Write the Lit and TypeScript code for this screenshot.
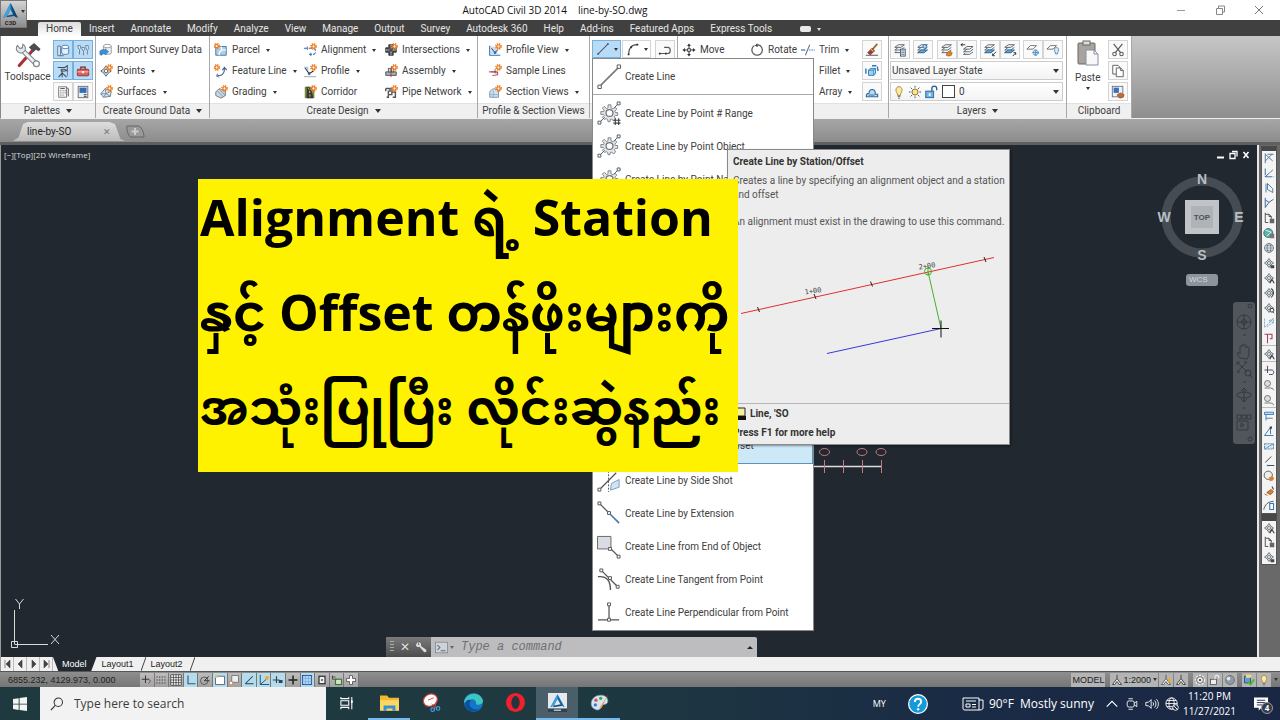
import { LitElement, html, css, svg, nothing } from "lit";
import { customElement, property } from "lit/decorators.js";

const badge = svg`<circle cx="12" cy="4" r="3" fill="none" stroke="#f28a2e" stroke-width="2" stroke-dasharray="1.4 1"/><circle cx="12" cy="4" r="1.9" fill="#fff3d8" stroke="#e8701a" stroke-width="1.2"/>`;
const layers = svg`<path d="M2 5l4-3h7l-4 3zM2 8l4-3M2 8h7l4-3M2 11h7l4-3M2 11l2-1.500" fill="none" stroke="#5a6570" stroke-width="1.100"/>`;
const gear = svg`<path d="M11.500 5h3v3l2 1 2.500-1.500 1.500 2-2 2 .5 1.500h2.500v3H19l-1 1.500 1.500 2-2 2-2.500-1.500h-1l-.5 2.500h-2l-.5-2.500-1-.5L7.500 20l-2-2 2-2-.8-1H4v-3h3l.5-1.500-2-2 2-2L10 9l1.500-1z" fill="#e3e6e9" stroke="#7b8289"/><circle cx="13" cy="13.500" r="3.600" fill="#fff" stroke="#6d747b" stroke-width="1.300"/>`;
const ends = svg`<path d="M3 23l5-5M18 8l4-4" stroke="#555c63"/><path d="M1 22h3v3H1zM21 2h3v3h-3z" fill="#fff" stroke="#555c63"/>`;
const compass = svg`<path d="M8 2l2.500 3.500L14 8l-3.500 2.500L8 14l-2.500-3.500L2 8l3.500-2.500z" fill="#d4dadf" stroke="#4e5961"/><circle cx="8" cy="8" r="2" fill="#fff" stroke="#4e5961"/>`;

const glyphs: Record<string, unknown> = {
  logo: svg`<path d="M8 0L1 14l4-2 3-6 3 6 4 2z" fill="#1668a8"/><path d="M8 0v6L5 12l-4 2z" fill="#3da3e0"/><path d="M8 0l7 14-4-2z" fill="#0b4577"/><path d="M5 12l6-1.500.6 1.700L4 13.500z" fill="#0e4f88"/>`,
  tools: svg`<path d="M3 14L11 5" stroke="#a8323a" stroke-width="1.800" stroke-linecap="round"/><path d="M8.500 3.500l3-2.300 3.700 3.300-1 1.300-1.600-.8-1.600 1.300z" fill="#4a4f54"/><path d="M4.500 5l8 8" stroke="#7f878d" stroke-width="2.800" stroke-linecap="round"/><path d="M4.500 5l8 8" stroke="#eef1f3" stroke-width="1.600" stroke-linecap="round"/><path d="M2 2.500a2.600 2.600 0 1 0 3-.6L4.800 4l-1.500.3z" fill="#e4e8ea" stroke="#7f878d" stroke-width=".6"/><circle cx="12.800" cy="13" r="1.700" fill="#fff" stroke="#7f878d" stroke-width=".7"/>`,
  survey: svg`<path d="M2 3.500v11h3V3.500z" fill="#eef3f8" stroke="#4e6a86"/><path d="M6.500 5v6.500c0 2 8 2 8 0V5" fill="#e6f1fb" stroke="#3c78b0"/><ellipse cx="10.500" cy="4.500" rx="4" ry="2" fill="#fff" stroke="#3c78b0"/><path d="M4 14.500h5" stroke="#3c78b0"/>`,
  panorama: svg`<path d="M2 3h3v3L4 7v6M6.500 5h3v3l-1 1v5M11 3h3v4l-1 1v5M2 3l1 4M11 3l1 5M6.500 5l1 4" fill="#f7fbff" stroke="#5c7791"/>`,
  transit: svg`<path d="M2 4h8l3-2v6l-3-2H6v2h5M7 8v2M7 10l-4 5M7 10v5M7 10l5 5" fill="#dde8f2" stroke="#3c4a57" stroke-width="1.200"/><path d="M13 2v12" stroke="#55738f"/>`,
  toolbox: svg`<path d="M5.500 6V3.500h5V6" fill="none" stroke="#7b2323" stroke-width="1.300"/><rect x="1.500" y="6" width="13" height="7.500" rx="1" fill="#d9605c" stroke="#8e2c2c"/><path d="M1.500 9h13" stroke="#fbd5d2"/><path d="M7 8h2v2.500H7z" fill="#fff"/>`,
  calcsheet: svg`<path d="M3 2h9v12H3z" fill="#f2f2f2" stroke="#777"/><path d="M5 4h5M5 6.500h1M7.500 6.500h1M5 9h1M7.500 9h1M5 11.500h1M7.500 11.500h1M10 6.500h1M10 9h1" stroke="#444"/><path d="M12 3l2 1v9" stroke="#444" fill="none"/>`,
  design: svg`<rect x="2.500" y="1.500" width="11" height="13" fill="#e9eef3" stroke="#666"/><rect x="4" y="3" width="8" height="6" fill="#2f6db5"/><path d="M9 11h3M9 13h3" stroke="#333"/>`,
  import: svg`<path d="M5 3.500v8c0 2 9 2 9 0v-8" fill="#eef2f5" stroke="#8b949b"/><ellipse cx="9.500" cy="3.500" rx="4.500" ry="2" fill="#fff" stroke="#8b949b"/><path d="M1 10c0-2 3-3 6-2V6.500l4 3.500-4 3.500V12c-3 0-3 2-5 2-1.500-1-1-3-1-4z" fill="#3f8fd4" stroke="#1f5f9c" stroke-width=".6"/>`,
  points: svg`${compass}${badge}`,
  surfaces: svg`<path d="M2 10l5-6 7 3-1 6-8 1z" fill="#dfe8ee" stroke="#68737b"/><path d="M7 4l1 6 5 3M8 10l-6 0M8 10l-3 4M8 10l6-3" fill="none" stroke="#68a"/>${badge}`,
  parcel: svg`<path d="M2 4h12v10H2z" fill="#a9d0ee" stroke="#3f6f96"/><path d="M8 4l1 4-3 3v3M9 8h5" fill="none" stroke="#fff" stroke-width="1.400"/><g transform="translate(-9 -.5)">${badge}</g>`,
  feature: svg`<path d="M4 13c5 1 8-2 8-8M9.500 7L12 4l2.500 3" fill="none" stroke="#4a5f8a" stroke-width="1.300"/><path d="M4 11l-1 3 3 1" fill="none" stroke="#4a5f8a"/><g transform="translate(-9 0)">${badge}</g>`,
  grading: svg`<path d="M2 8l4-4 7 3v5l-5 3-6-3z" fill="#cfd6db" stroke="#6b757c"/><path d="M4 7l7 7M6 5l7 7" stroke="#5b9bd0"/>${badge}`,
  alignment: svg`<path d="M1 6h11c3 0 3 7 0 7H7" fill="none" stroke="#356fae" stroke-dasharray="4 1.500" stroke-width="1.200"/><path d="M5 4v4M9 11v4" stroke="#356fae"/>${badge}`,
  profile: svg`<path d="M1 14.500h14" stroke="#999"/><path d="M2 4l5 7 5-3" fill="none" stroke="#222" stroke-width="1.200"/><path d="M1 3h5v5z" fill="#9cc6ea"/><circle cx="7" cy="11" r="1.500" fill="#2c5b8c"/>${badge}`,
  corridor: svg`<path d="M2 2h11v13H2z" fill="#7b8a3a"/><path d="M4 15c0-5 1-8 0-13h3c3 4 4 9 5 13z" fill="#33363a"/><path d="M6 3c2 3 2 8 2 12" stroke="#f7d64a" fill="none" stroke-dasharray="2.500 1.500"/>${badge}`,
  intersect: svg`<path d="M5.500 2h5v3.500H14v5h-3.500V14h-5v-3.500H2v-5h3.500z" fill="#4b5157" stroke="#25292c"/><path d="M8 2v4M8 10v4M2 8h4M10 8h4" stroke="#e8e8e8" stroke-dasharray="2 1"/>${badge}`,
  assembly: svg`<path d="M2 9h12v4H2z" fill="#a9b2b8" stroke="#424a50"/><path d="M5 5h3v4H5zM8.500 3h2.500v6H8.500z" fill="#d9dee2" stroke="#424a50"/><path d="M8 9v6" stroke="#c23"/>${badge}`,
  pipe: svg`<path d="M2 4h5v3H5v4h4V8h4v6h-3M2 4v3M5 11v3H3" fill="none" stroke="#555" stroke-width="1.600"/><path d="M9 3v5" stroke="#777" stroke-width="2"/>${badge}`,
  pview: svg`<path d="M2 3v11h12" fill="none" stroke="#2f6db5" stroke-width="1.300"/><path d="M3 4h8v9H3z" fill="#c7def2"/><path d="M4 6l4 5 3-3" stroke="#333" fill="none"/><circle cx="8" cy="11" r="1.500" fill="#2f6db5"/>${badge}`,
  sample: svg`<path d="M1 9h10v4M5 13c7 1 7-4 3-4" stroke="#a34a5a" fill="none" stroke-width="1.100"/><path d="M3 9h6M8 6v5" stroke="#8a4a5e"/>${badge}`,
  sview: svg`<path d="M2 14V8c2-4 6-5 10-2v8z" fill="#cfe0ee" stroke="#6c8fae"/><path d="M2 11h10M6 6v8" stroke="#8fb0cc"/>${badge}`,
  line: svg`<path d="M3 13L13 3" stroke="#4a5f78" stroke-width="1.200"/><path d="M1.500 12.500h2v2h-2zM12.500 1.500h2v2h-2z" fill="#3f566f"/>`,
  arc: svg`<path d="M3 14C3 7 6 3 13 3" fill="none" stroke="#444" stroke-width="1.200"/><path d="M2 13h2v2H2zM12 2h2v2h-2zM5 5h2v2H5z" fill="#333"/>`,
  pline: svg`<path d="M2 12h9c4 0 4-7 0-7H7" fill="none" stroke="#555" stroke-width="1.300"/><path d="M1 11h2v2H1zM8 11h2v2H8z" fill="#333"/>`,
  move: svg`<path d="M8 3v10M3 8h10" stroke="#333" stroke-width="1.200"/><path d="M8 .5L5.800 3.500h4.400zM8 15.500l-2.200-3h4.400zM.5 8l3-2.200v4.400zM15.500 8l-3-2.200v4.400z" fill="#333"/><rect x="6.500" y="6.500" width="3" height="3" fill="#fff" stroke="#333"/>`,
  rotate: svg`<path d="M5 2.800A6 6 0 1 0 9 2" fill="none" stroke="#5a6066" stroke-width="1.500"/><path d="M8.500.2L5.500 3l3.500 1.700z" fill="#333"/>`,
  trim: svg`<path d="M0 8h5" stroke="#356fae" stroke-width="1.300"/><path d="M5 14L10 2" stroke="#6b747c" stroke-width="1.200"/><path d="M9 8h7" stroke="#356fae" stroke-dasharray="2 1"/>`,
  fillet: svg`<path d="M2 3h6c4 0 6 3 6 11" fill="none" stroke="#333" stroke-width="2"/>`,
  array: svg`<path d="M2 2h5v5H2zM9 2h5v5H9zM2 9h5v5H2zM9 9h5v5H9z" fill="#5da0d6" stroke="#2d659c"/>`,
  erase: svg`<path d="M1 14h14" stroke="#444"/><path d="M14 1L8 8" stroke="#9a6a2c" stroke-width="2"/><path d="M8 6l3 3-5 4.500-3-2.500z" fill="#a33c2c" stroke="#6b2018" stroke-width=".7"/><path d="M7 7l2.500 2.500" stroke="#f0c060" stroke-width="1.300"/>`,
  explode: svg`<path d="M4 7h6v6H4zM4 7l2-2h6l-2 2M12 5v6l-2 2" fill="#9bd0f2" stroke="#2d78b3"/><path d="M1 5v6M14 3l1 5M8 2h5" stroke="#2d78b3" stroke-width="1.600"/>`,
  offset: svg`<path d="M1.500 13.500h13v-3h-3c2-6-7-8-7-1-3 0-3 2-3 4z" fill="#b7d8ee" stroke="#2d659c" stroke-width="1.200"/><path d="M4 11.500h6.500" stroke="#2d659c"/>`,
  lprops: svg`${layers}<rect x="8.500" y="7" width="5.500" height="8" fill="#e7edf2" stroke="#44576a"/><path d="M9.500 9h3.500M9.500 11h3.500M9.500 13h3.500" stroke="#44576a" stroke-width=".8"/>`,
  lcur: svg`${layers}<path d="M2 11l4-3h7l-4 3z" fill="#5fa8dc" stroke="#2a6ca4"/><circle cx="10" cy="4" r="2.200" fill="#a7d3f2" stroke="#2a6ca4"/>`,
  lmatch: svg`${layers}<path d="M8 11l3-2 3 2-1 3-3 1-3-1z" fill="#d9822b" stroke="#8c4b10" stroke-width=".6"/>`,
  lprev: svg`<g transform="translate(2 2)">${layers}</g><path d="M6 2H1M3 .5L1 2l2 1.500" stroke="#222" fill="none"/>`,
  liso: svg`${layers}<path d="M2 11l4-3h7l-4 3z" fill="#5fa8dc" stroke="#2a6ca4"/><path d="M15 10l-4 4M11 12v2.500h2.500" stroke="#222" fill="none"/>`,
  lunis: svg`${layers}<path d="M2 11l4-3h7l-4 3z" fill="#5fa8dc" stroke="#2a6ca4"/><path d="M11 15l3.500-3.500M12 11h2.500v2.500" stroke="#222" fill="none"/>`,
  lfreeze: svg`<path d="M1 7l4-4h7L8 7z" fill="#fff" stroke="#5a6570"/><circle cx="11" cy="11" r="3" fill="#c5e2f7" stroke="#2a6ca4" stroke-dasharray="2 .8"/><path d="M11 7.500v7M7.500 11h7" stroke="#2a6ca4" stroke-width=".7"/>`,
  loff: svg`<path d="M1 7l4-4h7L8 7z" fill="#fff" stroke="#5a6570"/><path d="M9.500 7.500c0-3 5-3 5 0 0 2-1.500 3-1.500 5h-2c0-2-1.500-3-1.500-5z" fill="#d5ebfa" stroke="#3a7ab0" stroke-width=".9"/>`,
  bulb: svg`<path d="M4.500 6c0-5.500 7-5.500 7 0 0 2.500-2 3-2 6h-3c0-3-2-3.500-2-6z" fill="#ffe9a0" stroke="#9c8232"/><path d="M6.500 13h3M7 15h2" stroke="#555"/>`,
  sun: svg`<circle cx="8" cy="8" r="3.500" fill="#ffe285" stroke="#70683e"/><path d="M8 1v2M8 13v2M1 8h2M13 8h2M3 3l1.500 1.500M11.500 11.500L13 13M3 13l1.500-1.500M11.500 4.500L13 3" stroke="#555" stroke-width="1.100"/>`,
  unlock: svg`<rect x="2" y="7" width="9" height="7.500" fill="#6db6e6" stroke="#285f8c"/><path d="M9 7V4c0-3.500 5.500-3.500 5.500 0v2" fill="none" stroke="#285f8c" stroke-width="1.500"/><path d="M5.500 9.500h2v3h-2z" fill="#fff"/>`,
  cut: svg`<path d="M3 1l8 10M13 1L5 11" stroke="#555" stroke-width="1.300"/><circle cx="4" cy="12.500" r="2" fill="none" stroke="#555" stroke-width="1.200"/><circle cx="12" cy="12.500" r="2" fill="none" stroke="#555" stroke-width="1.200"/>`,
  copy: svg`<path d="M2 1.500h6l2 2v8H2z" fill="#fff" stroke="#555"/><path d="M6 4.500h5l3 3v7H6z" fill="#fff" stroke="#555"/><path d="M11 4.500v3h3" fill="none" stroke="#555"/>`,
  pspec: svg`<rect x="1.500" y="1.500" width="12" height="12" fill="#eef3f8" stroke="#67727d"/><path d="M3 3h6v6H3z" fill="#3c6fb5"/><path d="M7 11l4-2 4 2-1 3-4 1-2-2z" fill="#c86a2a" stroke="#75380c" stroke-width=".6"/>`,
  folder: svg`<path d="M0 2h6l1.500 2H16v10H0z" fill="#f5b92e"/><path d="M0 6h16v9H0z" fill="#fcd667"/><path d="M3 15v-4.500h10V15h-2.500v-2h-5v2z" fill="#3b8fd0"/>`,
  snip: svg`<ellipse cx="7" cy="6" rx="6" ry="5" fill="#fff" stroke="#d54040" transform="rotate(-25 7 6)"/><path d="M5 6l5-2M12 8l-2 7M8 9l5 5" stroke="#c44" stroke-width=".8"/><circle cx="9" cy="14" r="1.500" fill="none" stroke="#3aa0e0"/><circle cx="13.500" cy="13" r="1.500" fill="none" stroke="#3aa0e0"/>`,
  edge: svg`<circle cx="8" cy="8" r="8" fill="#1277c8"/><path d="M0 8C1-1 14-2 16 6.500c0 3-4 4-6 3 1-3-2-5-4-4S2 8 0 8z" fill="#3cc6c0"/><path d="M6 6c-4 5 2 10 8 7-6 5-13 2-13-4 0-3 3-4 5-3z" fill="#0d4f9c"/>`,
  opera: svg`<circle cx="8" cy="8" r="8" fill="#f0202c"/><ellipse cx="8" cy="8" rx="3.500" ry="5.500" fill="#233640"/>`,
  acad: svg`<rect width="16" height="16" fill="#e4e9ed"/><path d="M8 1L2 12l3-1.500L8 5l3 5.500 3 1.500z" fill="#1668a8"/><path d="M8 1v4l-3 5.500L2 12z" fill="#3da3e0"/><path d="M5 10.500l6-1 .6 1.500L4 12z" fill="#0e4f88"/><path d="M0 13h16v3H0z" fill="#33424e"/><path d="M5 14.500h6" stroke="#ddd"/>`,
  paint: svg`<path d="M1 9c0-5 5-8 10-7 4 1 5 5 3 7-2 1-3 0-4 2s-2 4-5 3-4-3-4-5z" fill="#d6e5f0" stroke="#7f9bb0" stroke-width=".6"/><circle cx="5" cy="6" r="1.400" fill="#e14b4b"/><circle cx="9" cy="4.500" r="1.400" fill="#35a853"/><circle cx="4.500" cy="10" r="1.400" fill="#2f7fe0"/><path d="M15.500 1L9 11l-1.500 3L10 12z" fill="#e3a03c"/>`,
  taskview: svg`<path d="M1 1v2h9V1M1 15v-2h9v2M1 5.500h9v5H1z" fill="none" stroke="#fff" stroke-width="1.200"/><path d="M13.500 1v14" stroke="#fff" stroke-width="1.200"/><path d="M12.500 5h2v3h-2z" fill="#fff"/>`,
  windows: svg`<path d="M0 2.300l6.500-1V7.600H0zM7.500 1.200L16 0v7.600H7.500zM0 8.500h6.500v6.300l-6.500-1zM7.500 8.500H16V16l-8.500-1.200z" fill="#f4f4f4"/>`,
  search: svg`<circle cx="9.500" cy="6" r="4.800" fill="none" stroke="#333" stroke-width="1.200"/><path d="M6 9.500L1 15" stroke="#333" stroke-width="1.300"/>`,
  help: svg`<circle cx="8" cy="8" r="7.500" fill="#149ad8" stroke="#fff"/><path d="M5.500 6.300c0-3.300 5-3.300 5 0 0 1.700-2.400 1.900-2.400 3.900" fill="none" stroke="#fff" stroke-width="1.500"/><circle cx="8.100" cy="12.200" r=".95" fill="#fff"/>`,
  chevup: svg`<path d="M2 11l6-6 6 6" fill="none" stroke="#fff" stroke-width="1.300"/>`,
  meet: svg`<rect x="2.500" y="4.500" width="8" height="7" rx="2" fill="none" stroke="#fff"/><path d="M10.500 7l3-2v6l-3-2M4 2h5M4 14h5" fill="none" stroke="#fff"/>`,
  volume: svg`<path d="M1 6h3l3-3v10l-3-3H1z" fill="none" stroke="#fff"/><path d="M9 6c1 1 1 3 0 4M11 4c2 2 2 6 0 8M13 2.500c3 3 3 8 0 11" fill="none" stroke="#fff"/>`,
  globe: svg`<circle cx="7.500" cy="7.500" r="6.500" fill="none" stroke="#fff"/><ellipse cx="7.500" cy="7.500" rx="3" ry="6.500" fill="none" stroke="#fff"/><path d="M1 7.500h13M2 4h11M2 11h7" stroke="#fff"/><circle cx="12" cy="12" r="3.200" fill="#1b2e46" stroke="#fff"/><path d="M10 10l4 4" stroke="#fff"/>`,
  note: svg`<path d="M0 1h15v11H8l-3 3v-3H0z" fill="#fff"/><path d="M3 4h9M3 6.500h9M3 9h6" stroke="#1b2946"/>`,
  anno: svg`<path d="M8 1v5M8 6l-6 8h3l3-4 3 4h3z" fill="#e8e8e8" stroke="#333" stroke-width="1.100"/>`,
  annoy: svg`<path d="M8 1v5M8 6l-6 8h3l3-4 3 4h3z" fill="#eee" stroke="#444"/><path d="M11 5l3 1-1 3 2 1-4 2z" fill="#f2a91e"/>`,
  cog: svg`<circle cx="8" cy="8" r="5.500" fill="none" stroke="#eee" stroke-width="3" stroke-dasharray="2.400 1.600"/><circle cx="8" cy="8" r="4.500" fill="#eee" stroke="#444"/><circle cx="8" cy="8" r="1.500" fill="#444"/>`,
  lockg: svg`<rect x="2" y="7" width="8" height="7" fill="#eee" stroke="#444"/><path d="M8 7V4c0-3 5-3 5 0v2" fill="none" stroke="#eee" stroke-width="1.500"/>`,
  ball: svg`<circle cx="8" cy="8" r="6" fill="#8d99a5" stroke="#666"/><circle cx="6" cy="6" r="2.500" fill="#dfe6ec"/>`,
  trust: svg`<path d="M2 3h8v9H2z" fill="#5a9fd8" stroke="#245"/><path d="M4 1h7v4H4z" fill="#f7d77a"/><path d="M7 10l3 4 5-7" stroke="#4db52c" stroke-width="2.200" fill="none"/>`,
  wrench: svg`<path d="M4 1L2 3c-2 3 1 5 4 4l6 7c2 1 4-1 3-3L8 6c1-3-1-5-4-5l2 3-2 1z" fill="#ddd"/>`,
  prompt: svg`<rect x=".5" y="1.500" width="15" height="13" fill="#cfd3d7" stroke="#84898e"/><path d="M3 5l3 3-3 3M7 12h6" fill="none" stroke="#5c6b7c" stroke-width="1.300"/>`,
  s0: svg`<path d="M6 2v10M1 7h10" stroke="#333" stroke-width="1.300"/><path d="M9 7l4 2-3 4" fill="none" stroke="#844"/>`,
  s1: svg`<path d="M2 4h12M2 8h12M2 12h12" stroke="#333" stroke-width="1.500" stroke-dasharray="1.500 2"/>`,
  s2: svg`<path d="M1 1h14v14H1zM1 4.500h14M1 8h14M1 11.500h14M4.500 1v14M8 1v14M11.500 1v14" fill="#fff" stroke="#333"/>`,
  s3: svg`<path d="M4 2v11h10" fill="none" stroke="#357" stroke-width="1.500"/>`,
  s4: svg`<circle cx="7" cy="9" r="5" fill="none" stroke="#444"/><path d="M7 9h7M7 9l6-6" stroke="#333" stroke-width="1.300"/>`,
  s5: svg`<path d="M2 3h12v11H2z" fill="#fff" stroke="#446"/><path d="M1 1h4v4H1z" fill="#dfc27a"/>`,
  s6: svg`<path d="M5 2h9v9H5z" fill="#eee" stroke="#666"/><circle cx="4" cy="12" r="2.500" fill="#fff" stroke="#d36b2c"/>`,
  s7: svg`<path d="M3 13h11M3 13L13 3" stroke="#246" stroke-width="1.400" fill="none"/>`,
  s8: svg`<path d="M3 1v13h12M3 14l8-7" stroke="#257" fill="none" stroke-width="1.300"/><circle cx="12" cy="5" r="2.500" fill="#f6a623"/>`,
  s9: svg`<path d="M6 3v9M1 8h9" stroke="#345" stroke-width="1.500"/><path d="M9 8h5v4H9z" fill="#345"/>`,
  s10: svg`<path d="M8 2v12M2 8h12" stroke="#222" stroke-width="2"/>`,
  s11: svg`<rect x="2" y="2" width="12" height="12" fill="#b8d8f4" stroke="#2a5fb0" stroke-width="1.500"/><path d="M2 6h12M2 10h12M6 2v12M10 2v12" stroke="#7aa9dc"/>`,
  s12: svg`<rect x="4" y="3" width="8" height="10" fill="#eee" stroke="#222" stroke-width="1.500"/><path d="M7 8h2" stroke="#222" stroke-width="2"/>`,
  s13: svg`<path d="M2 2v5h6M1 4h5" stroke="#333" fill="none"/><rect x="6" y="7" width="8" height="7" fill="#cfe5c5" stroke="#3a7a2c" stroke-width="1.500"/>`,
  s14: svg`<path d="M6 2h4v4h4v4h-4v4H6v-4H2V6h4z" fill="#fff" stroke="#444"/>`,
  v0: svg`<path d="M3 2v13M3 3l10 9M3 12l9-9M6 3h8" stroke="#4a6f96" stroke-width="1.200" fill="none"/>`,
  v1: svg`<path d="M3 2v11l10-9M3 13h11" stroke="#2f5f96" stroke-width="1.200" fill="none" stroke-dasharray="9 1"/>`,
  v2: svg`<path d="M4 2v12M6 2l7 7v5M6 2v8l7 4" stroke="#3f74a8" stroke-width="1.200" fill="none"/>`,
  v3: svg`<path d="M3 1v13M3 4l5 3 6-4M8 7l-5 7" stroke="#2f5f96" stroke-width="1.200" fill="none"/>`,
  v4: svg`<path d="M3 1v13h4M3 3h5l3 3v3M8 3v3h3" stroke="#444" fill="none" stroke-width="1.200"/><rect x="9" y="9" width="6" height="6" fill="#666"/>`,
  v5: svg`<circle cx="7" cy="8" r="6" fill="#59b7a5" stroke="#356"/><path d="M3 4l8 3-6 5" stroke="#fff" fill="none"/><rect x="9" y="9" width="6" height="6" fill="#777"/>`,
  v6: svg`<circle cx="8" cy="8" r="6" fill="#fff" stroke="#567"/><ellipse cx="8" cy="8" rx="2.500" ry="6" fill="none" stroke="#567"/><path d="M2 8h12M3 5h10M3 11h10" stroke="#567"/>`,
  v7: svg`${compass}<path d="M10 11h5v4h-5z" fill="#444"/>`,
  v8: svg`${compass}<path d="M9 15l3-5 3 5" fill="none" stroke="#333" stroke-width="1.400"/>`,
  v9: svg`${compass}<path d="M11 2c4 3 4 8 0 12" fill="none" stroke="#333" stroke-width="1.400"/>`,
  v10: svg`${compass}<circle cx="12" cy="11" r="2.500" fill="#fff" stroke="#333" stroke-width="1.300"/><path d="M13 13l2 2" stroke="#333"/>`,
  v11: svg`<path d="M2 2v12M2 14L13 3M5 13l9-6M8 5l6-3v6z" stroke="#6b9cc6" fill="#d4e8f8" stroke-dasharray="3 1"/>`,
  v12: svg`<path d="M2 3h10v6H9M6 3v12" stroke="#a34058" stroke-width="1.400" fill="none"/>`,
  v13: svg`<path d="M2 8h10c3 0 3 6 0 6H8M6 3v9" stroke="#445" fill="none" stroke-width="1.200"/><path d="M5 3h2" stroke="#c33"/>`,
  v14: svg`<circle cx="6" cy="6" r="4" fill="#ddd" stroke="#555"/><path d="M2 12h8c4 0 4 3 4 3" stroke="#555" fill="none"/>`,
  v15: svg`<path d="M2 3h12v3H2zM4 6v8M4 11h9" stroke="#3c7ab0" fill="#bfe0f7" stroke-width="1.200"/>`,
  v16: svg`<path d="M2 14L10 3v9M2 14h12" stroke="#3c7ab0" fill="none" stroke-width="1.300"/><path d="M9 2h3v3H9z" fill="#444"/>`,
  v17: svg`<path d="M2 5h12v7H2zM2 12l12-7" stroke="#456f96" fill="#d0e6f7" stroke-dasharray="3 1"/>`,
  v18: svg`<path d="M3 10l8-8M6 14h9" stroke="#445" stroke-width="1.300"/><path d="M5 13h2v2H5z" fill="#38b"/>`,
  v19: svg`<circle cx="7" cy="7" r="5.500" fill="#eee" stroke="#555" stroke-width="1.200"/><path d="M8 10l4-2 3 3-2 3-4 1z" fill="#d9822b"/>`,
  v20: svg`<path d="M2 12l4 2M5 10l6-4 3 3-4 4z" stroke="#8a4a14" fill="#d9822b"/><path d="M12 2l2 4" stroke="#445" stroke-width="1.500"/>`,
  v21: svg`<path d="M1 14C3 7 6 4 14 3" stroke="#445" fill="none" stroke-width="1.200"/><rect x="9" y="6" width="5" height="8" fill="#fff" stroke="#357ab0" stroke-width="1.400"/>`,
};

const menuGlyphs: Record<string, unknown> = {
  line: svg`<path d="M4 23L22 5" stroke="#777" stroke-width="1.600"/><path d="M1 23h3.500v3.500H1zM21 2h3.500v3.500H21z" fill="#fff" stroke="#555"/>`,
  range: svg`${gear}${ends}<path d="M19 19v7M22.500 19v7M17 21h7.500M17 24h7.500" stroke="#444" stroke-width="1.200"/>`,
  point: svg`${gear}${ends}`,
  side: svg`<path d="M4 22L20 6" stroke="#555" stroke-width="1.300"/><path d="M12 4v22" stroke="#555" stroke-dasharray="2 1.500"/><path d="M1 22h3v3H1z" fill="#fff" stroke="#555"/><path d="M15 17l8-4v8l-9 3z" fill="#cfe4f4" stroke="#7f9db5"/>`,
  extend: svg`<path d="M3 4l9 9" stroke="#555" stroke-width="1.300"/><path d="M12 13l11 11" stroke="#3e74a8" stroke-width="1.500"/><path d="M1 2h3v3H1zM11 12h3v3h-3z" fill="#fff" stroke="#555"/>`,
  endof: svg`<path d="M.5 2.500h14v13H.500z" fill="#d9dce4" stroke="#666"/><path d="M14 15l8 8" stroke="#555" stroke-width="1.300"/><path d="M12 14h3v3h-3zM21 22h3v3h-3z" fill="#fff" stroke="#555"/>`,
  tangent: svg`<path d="M1 10c10-1 13 5 13 14" fill="none" stroke="#555" stroke-width="1.400"/><path d="M5 4l16 16" stroke="#555" stroke-width="1.300"/><path d="M3 2h3v3H3zM12 10h3v3h-3zM20 19h3v3h-3z" fill="#fff" stroke="#555"/>`,
  perp: svg`<path d="M12.500 4v16M1 20.500h22" stroke="#555" stroke-width="1.300"/><path d="M11 3h3v3h-3zM11 19h3v3h-3z" fill="#fff" stroke="#555"/>`,
};

@customElement("cad-icon")
export class CadIcon extends LitElement {
  @property() name = "";
  static styles = css`
    :host { display: inline-block; width: 14px; height: 14px; flex: none; }
    svg { display: block; width: 100%; height: 100%; }
  `;
  render() {
    return html`<svg viewBox="0 0 16 16" aria-hidden="true">${glyphs[this.name] ?? nothing}</svg>`;
  }
}

const ribbonTabs = ["Home", "Insert", "Annotate", "Modify", "Analyze", "View", "Manage", "Output", "Survey", "Autodesk 360", "Help", "Add-ins", "Featured Apps", "Express Tools"];

const pointCommands: [string, string][] = [
  ["range", "Create Line by Point # Range"],
  ["point", "Create Line by Point Object"],
  ["point", "Create Line by Point Name"],
];

const offsetCommands: [string, string][] = [
  ["side", "Create Line by Station/Offset"],
  ["side", "Create Line by Side Shot"],
  ["extend", "Create Line by Extension"],
  ["endof", "Create Line from End of Object"],
  ["tangent", "Create Line Tangent from Point"],
  ["perp", "Create Line Perpendicular from Point"],
];

const statusToggles: [string, boolean][] = [
  ["s0", false], ["s1", false], ["s2", false], ["s3", true], ["s4", false], ["s5", true], ["s6", false], ["s7", true],
  ["s8", true], ["s9", true], ["s10", false], ["s11", true], ["s12", false], ["s13", false], ["s14", false],
];

const sideTools = [
  ["v0", "v1", "v2", "v3", "v4", "v5", "v6", "v7", "v8", "v9", "v10", "v11", "v12"],
  ["v8"],
  ["v13", "v14", "v14"],
  ["v15", "v16", "v17", "v18", "v19", "v20", "v21"],
];

@customElement("app-root")
export class AppRoot extends LitElement {
  static styles = css`
    :host {
      display: flex; flex-direction: column; height: 100vh; overflow: hidden; position: relative;
      font: 10px/14px Roboto, "Noto Sans", sans-serif; color: #404040; background: #212830;
    }
    * { box-sizing: border-box; }
    button, select, input { font: inherit; color: inherit; margin: 0; padding: 0; border: 0; background: none; }
    button { display: flex; align-items: center; white-space: nowrap; }

    .title { height: 20px; flex: none; background: #fff; display: grid; grid-template-columns: 1fr auto 1fr; align-items: center; color: #111; font-family: "Open Sans", sans-serif; }
    .title .name { grid-column: 2; display: flex; gap: 11px; padding-right: 170px; }
    .winbtns { grid-column: 3; justify-self: end; display: flex; gap: 27px; padding-right: 15px; color: #888; }
    .winbtns svg { width: 12px; height: 12px; display: block; }
    .appbtn {
      position: absolute; left: 0; top: 0; z-index: 3; width: 27px; height: 28px; border: 1px solid #777;
      background: linear-gradient(#d4d4d4, #8d8d8d); display: grid; grid-template-columns: 19px 5px; justify-items: center; align-content: center;
    }
    .appbtn cad-icon { width: 17px; height: 17px; }
    .appbtn .caret { margin: 0; }
    .appbtn b { font-size: 6px; line-height: 6px; color: #222; }

    .caret { width: 0; height: 0; border: 3px solid transparent; border-top-color: #333; border-bottom: 0; flex: none; border-left-width: 2px; border-right-width: 2px; margin-left: 6px; }
    .caret.big { border-left-width: 3px; border-right-width: 3px; border-top-width: 4px; }

    .tabs { height: 16px; flex: none; background: #404040; display: flex; align-items: flex-end; padding-left: 38px; color: #e6e6e6; }
    .tabs button { height: 14px; padding: 0 8px; }
    .tabs .on { background: linear-gradient(#dcdcdc, #fff); color: #404040; border-radius: 2px 2px 0 0; }
    .tabs .pill { background: #e8e8e8; width: 11px; height: 6px; border-radius: 2px; margin: 0 0 4px 20px; }
    .tabs .caret { border-top-color: #ddd; margin-bottom: 5px; }

    .ribbon { height: 83px; flex: none; display: flex; position: relative; z-index: 2; background: linear-gradient(#c6c6c6, #8e8e8e); border-bottom: 1px solid #eee; border-left: 1px solid #888; }
    .panel { display: flex; flex-direction: column; background: #fff; border-right: 1px solid #a8a8a8; }
    .panel > footer { height: 15px; background: #f0f0f0; border-top: 1px solid #e2e2e2; display: flex; align-items: center; justify-content: center; white-space: nowrap; margin-top: auto; }
    .body { display: flex; padding-top: 4px; height: 67px; }
    .rows { display: grid; grid-template-rows: repeat(3, 20px); row-gap: 1px; justify-items: start; align-items: center; align-content: start; }
    .rows button cad-icon { margin-right: 4px; }
    .palettes { width: 95px; }
    .ground { width: 114px; } .ground .body { padding-left: 3px; }
    .design { width: 268px; } .design .body { padding-left: 4px; }
    .design .rows:nth-child(1) { width: 89px; }
    .design .rows:nth-child(2) { width: 81px; }
    .views { width: 112px; } .views .body { padding-left: 10px; }
    .draw { width: 88px; } .draw .body { padding: 4px 0 0 2px; gap: 1px; align-items: flex-start; position: relative; }
    .modify { width: 211px; } .modify .body { padding-left: 4px; padding-right: 6px; }
    .modify .rows:nth-child(1) { width: 68px; }
    .modify .rows:nth-child(2) { width: 51px; }
    .modify .stack { margin-left: auto; }
    .layers { width: 178px; } .layers .body { padding-left: 1px; padding-right: 3px; flex-direction: column; gap: 2px; }
    .clip { width: 65px; } .clip .body { padding: 4px 3px 0 8px; justify-content: space-between; }

    .big { flex-direction: column; }
    .big.ts { width: 52px; padding-left: 1px; }
    .big.ts cad-icon { width: 28px; height: 28px; margin: 1px 0; }
    .big.paste svg { width: 24px; height: 28px; margin-bottom: 3px; }
    .big.paste .caret { margin: 2px 0 0; }
    .pads { display: grid; grid-template-columns: 20px 20px; grid-auto-rows: 19px; gap: 2px 0; align-content: start; }
    .sq { width: 20px; height: 19px; justify-content: center; border: 1px solid #d4d4d4; background: #fafafa; }
    .sq.on, .split.on { background: #b8dcf8; border-color: #7aaedb; }
    .stack { display: grid; row-gap: 2px; align-content: start; }
    .split { height: 18px; border: 1px solid #d4d4d4; width: 29px; padding-left: 3px; }
    .split .caret { margin-left: 4px; }
    .gap { margin-left: 3px; }
    .lbtns { display: flex; justify-content: space-between; } .lbtns > span { display: flex; }
    .combo { display: flex; align-items: center; height: 19px; border: 1px solid #ccc; background: linear-gradient(#fff, #f3f3f3); padding: 0 3px 0 1px; gap: 2px; }
    .combo select { flex: 1; appearance: none; height: 17px; min-width: 0; outline: 0; }
    .combo .sw { width: 13px; height: 13px; border: 1px solid #444; background: #fff; margin: 0 2px; }

    .menu { position: absolute; left: 2px; top: 22px; width: 222px; background: #fff; border: 1px solid #888; display: flex; flex-direction: column; height: 573px; }
    .menu button { flex: 1; text-align: left; padding-left: 4px; gap: 3px; width: 100%; min-height: 0; }
    .menu .first { flex: none; height: 36px; border-bottom: 1px solid #aaa; margin-bottom: 2px; }
    .menu .hot { background: #cde8f7; border: 1px solid #5c93bb; padding-left: 3px; }
    .menu .covered { flex: 7; }
    .menu button svg { width: 25px; height: 27px; flex: none; }
    .tip { position: absolute; left: 134px; top: 90px; width: 283px; height: 296px; background: #ededed; border: 1px solid #8a8a8a; padding: 5px 0 0 5px; box-shadow: 1px 1px 2px rgb(0 0 0 / .4); display: flex; flex-direction: column; color: #555; }
    .tip b { color: #333; font-weight: 700; }
    .tip p { margin: 5px 0 0; line-height: 14px; }
    .tip p + p { margin-top: 13px; }
    .tip svg.dia { flex: 1; min-height: 0; width: 268px; margin-left: 3px; }
    .tip .foot { border-top: 1px solid #b5b5b5; margin-left: -5px; padding: 3px 0 4px 5px; display: grid; gap: 5px; }
    .tip .foot b { display: flex; gap: 4px; align-items: center; }
    .tip .foot svg { width: 13px; height: 14px; }

    .docs { height: 26px; flex: none; background: linear-gradient(#a6a6a6, #8c8c8c); border-bottom: 3px solid #5f5f5f; display: flex; align-items: flex-end; padding: 0 0 1px 13px; }
    .doctab { height: 19px; width: 112px; background: linear-gradient(#dedede, #bcbcbc); clip-path: polygon(0 100%, 5% 80%, 9% 10%, 13% 0, 86% 0, 91% 10%, 96% 90%, 100% 100%); padding: 0 14px; color: #222; display: flex; justify-content: space-between; align-items: center; }
    .doctab span { color: #777; font-size: 9px; }
    .docs .plus svg { width: 20px; height: 14px; margin: 0 0 2px 0; display: block; }

    .work { flex: 1; display: flex; min-height: 0; background: #696969; border-left: 1px solid #999; }
    .canvas { flex: 1; position: relative; background: #212830; border-right: 2px solid #e8e8e8; overflow: hidden; }
    .canvas > * { position: absolute; }
    .vplabel { left: 3px; top: 3px; font-size: 8px; font-family: "Open Sans", sans-serif; color: #ddd; }
    .mdi { right: 6px; top: 4px; width: 36px; height: 12px; }
    .cube { right: 13px; top: 24px; width: 92px; height: 94px; }
    .cube text { font: bold 14px "Liberation Sans", sans-serif; fill: #b9bec2; text-anchor: middle; }
    .cube .top { font-size: 8px; fill: #4b5258; }
    .wcs { right: 39px; top: 129px; width: 32px; height: 12px; border-radius: 3px; background: #8d949c; color: #d5d9dc; font: 8px/12px "Liberation Sans", sans-serif; padding-left: 3px; }
    .nav { right: 2px; top: 157px; width: 22px; height: 142px; background: #50565c; border-radius: 3px; }
    .nav svg { width: 22px; height: 142px; }
    .section { left: 813px; top: 300px; width: 80px; height: 30px; }
    .ucs { left: 8px; bottom: 5px; width: 56px; height: 56px; }
    .cmd { left: 385px; bottom: 0; width: 371px; height: 20px; display: flex; border-radius: 2px 2px 0 0; overflow: hidden; background: #bdbdbf; align-items: center; }
    .cmd .grip { align-self: stretch; width: 45px; background: linear-gradient(#7a7a7a, #4c4c4c); display: flex; align-items: center; justify-content: space-between; padding: 0 4px; color: #ddd; font-size: 12px; }
    .cmd .dots { width: 4px; height: 12px; background: repeating-linear-gradient(#aaa 0 1px, transparent 1px 3px); }
    .cmd cad-icon { margin-left: 4px; width: 13px; height: 13px; } .cmd .grip cad-icon { margin: 0; width: 12px; }
    .cmd .caret { margin-left: 2px; border-top-color: #666; }
    .cmd input { flex: 1; min-width: 0; margin-left: 7px; font: italic 12px "Liberation Mono", monospace; outline: 0; }
    .cmd input::placeholder { color: #707070; opacity: 1; }
    .up { width: 0; height: 0; border: 3px solid transparent; border-top: 0; border-bottom-color: #222; margin-right: 4px; }

    .side { width: 21px; flex: none; padding: 1px 3px 0 2px; }
    .dock { background: #f4f4f4; display: flex; flex-direction: column; border: 1px solid #555; border-top: 5px solid #484848; height: 368px; }
    .dock.small { height: 51px; border-top-width: 7px; }
    .dock div { display: flex; flex-direction: column; align-items: center; justify-content: space-around; flex: var(--n) 0 0; min-height: 0; }
    .dock div + div { border-top: 1px solid #bbb; }
    .dock cad-icon { width: 12px; height: 12px; }

    .sheets { height: 14px; flex: none; background: #f0f0f0; display: flex; align-items: stretch; color: #222; font: 9px/14px "Liberation Sans", sans-serif; border-left: 1px solid #999; }
    .sheets .go { width: 13px; border-right: 1px solid #bbb; justify-content: center; color: #333; }
    .sheets .go svg { width: 7px; height: 8px; }
    .sheets .model { background: #212830; color: #fff; padding: 0 10px 0 9px; clip-path: polygon(0 0, 100% 0, 88% 100%, 12% 100%); }
    .sheets .lay { padding: 0 7px 0 5px; }
    .sheets .slash { width: 5px; height: 14px; }

    .status { height: 16px; flex: none; background: linear-gradient(#8e8e8e, #767676); border-top: 1px solid #555; display: flex; align-items: center; font: 9px/14px "Liberation Sans", sans-serif; color: #222; padding-left: 8px; }
    .coords { width: 132px; }
    .toggles { display: grid; grid-template-columns: repeat(15, 1fr); width: 219px; height: 14px; }
    .toggles button { background: linear-gradient(#bdbdbd, #a2a2a2); border-right: 1px solid #777; justify-content: center; }
    .toggles .on { background: #b5dcea; }
    .toggles cad-icon { width: 12px; height: 12px; }
    .sright { margin-left: auto; display: flex; align-items: center; gap: 1px; }
    .sright button { height: 14px; background: #b4b4b4; padding: 0 1px; min-width: 14px; justify-content: center; }
    .sright cad-icon { width: 12px; height: 12px; }
    .sright .caret { margin-left: 2px; }
    .sright .g { margin-left: 4px; }
    .sright .end { background: none; min-width: 8px; }
    .sright .end .caret { margin: 0; }

    .task { height: 33px; flex: none; background: linear-gradient(90deg, #1f3a3e, #1e3940 45%, #1a2b45 75%, #1a2744); display: flex; align-items: stretch; color: #fff; font-family: "Open Sans", sans-serif; }
    .start { width: 40px; justify-content: center; } .start cad-icon { width: 14px; height: 14px; }
    .search { width: 286px; background: #f2f2f2; display: flex; align-items: center; padding-left: 10px; gap: 10px; color: #333; }
    .search input { font-size: 12px; flex: 1; min-width: 0; outline: 0; }
    .search input::placeholder { color: #3c3c3c; opacity: 1; }
    .apps { display: flex; } .apps button { width: 42px; justify-content: center; border-bottom: 2px solid transparent; }
    .apps cad-icon { width: 19px; height: 19px; } .apps .tv cad-icon { width: 14px; height: 14px; }
    .apps .run { border-bottom-color: #76b9ed; } .apps .on { background: #4a5f6a; }
    .tray { margin-left: auto; display: flex; align-items: center; font-size: 12px; padding-right: 11px; white-space: nowrap; }
    .tray .my { font-size: 9px; margin-right: 22px; }
    .tray cad-icon { width: 14px; height: 14px; margin-left: 6px; }
    .tray .hp { width: 20px; height: 20px; margin: 0 34px 0 0; }
    .tray .news { width: 22px; height: 14px; margin-right: 5px; }
    .tray .sunny { margin: 0 5px 0 6px; }
    .clock { font-size: 10px; line-height: 15px; text-align: center; margin: 0 18px 0 4px; }
    .bell { position: relative; display: flex; } .tray .bell cad-icon { margin: 0; width: 15px; height: 16px; }
    .bell i { position: absolute; left: 7px; top: 6px; width: 12px; height: 12px; border-radius: 6px; background: #333c48; border: 1px solid #99a; font: bold 8px/10px "Open Sans", sans-serif; text-align: center; }

    .banner { position: absolute; z-index: 5; left: 198px; top: 179px; width: 540px; height: 293px; background: #fff200; color: #000; margin: 0; padding-left: 2px; font: bold 50px/76px "Open Sans", "Noto Sans Myanmar", "Padauk", sans-serif; white-space: nowrap; display: grid; align-content: start; gap: 19px; }
    .banner .small { font-size: 48px; }
  `;

  private cmd(icon: string, label: string, caret = false) {
    return html`<button><cad-icon name=${icon}></cad-icon>${label}${caret ? html`<span class="caret"></span>` : nothing}</button>`;
  }
  private sq(icon: string, on = false) {
    return html`<button class="sq ${on ? "on" : ""}" aria-label=${icon}><cad-icon name=${icon}></cad-icon></button>`;
  }
  private menuItem([icon, label]: [string, string], hot = false) {
    return html`<button role="menuitem" class=${hot ? "hot" : ""}><svg viewBox="0 0 26 28">${menuGlyphs[icon]}</svg>${label}</button>`;
  }

  private tooltip() {
    return html`<div class="tip" role="tooltip">
      <b>Create Line by Station/Offset</b>
      <p>Creates a line by specifying an alignment object and a station and offset</p>
      <p>An alignment must exist in the drawing to use this command.</p>
      <svg class="dia" viewBox="736 230 268 173" preserveAspectRatio="xMidYMid meet">
        <path d="M741 314L994 258" stroke="#e03030" fill="none"/>
        <path d="M757.500 307.500l2 5M814 294.500l2 5M870.500 282l2 5M984 257.500l2 5" stroke="#222"/>
        <circle cx="928" cy="272" r="3.500" fill="none" stroke="#4ab02c"/><path d="M928 267v9M928 272l13 57" stroke="#4ab02c" fill="none"/>
        <path d="M827 354l114-25" stroke="#3838d8"/><path d="M932 329h17M941 321v17" stroke="#111"/>
        <text x="805" y="295" transform="rotate(-8 805 295)" font-size="7" fill="#444" font-family="DejaVu Sans Mono">1+00</text>
        <text x="919" y="270" transform="rotate(-8 919 270)" font-size="7" fill="#444" font-family="DejaVu Sans Mono">2+00</text>
      </svg>
      <div class="foot">
        <b><svg viewBox="0 0 13 14"><path d="M1 1h11v8H1z" fill="#f7f29a" stroke="#223"/><path d="M0 9h13v4H0z" fill="#111"/></svg>Line, 'SO</b>
        <b>Press F1 for more help</b>
      </div>
    </div>`;
  }

  private lineMenu() {
    return html`<div class="menu" role="menu">
      <button class="first" role="menuitem"><svg viewBox="0 0 26 28">${menuGlyphs.line}</svg>Create Line</button>
      ${pointCommands.map((c) => this.menuItem(c))}
      <div class="covered"></div>
      ${offsetCommands.map((c, i) => this.menuItem(c, i === 0))}
      ${this.tooltip()}
    </div>`;
  }

  private ribbon() {
    return html`<section class="ribbon">
      <div class="panel palettes"><div class="body">
        <button class="big ts"><cad-icon name="tools"></cad-icon>Toolspace</button>
        <div class="pads">${this.sq("survey", true)}${this.sq("panorama", true)}${this.sq("transit", true)}${this.sq("toolbox", true)}${this.sq("calcsheet")}${this.sq("design")}</div>
      </div><footer>Palettes<span class="caret big"></span></footer></div>
      <div class="panel ground"><div class="body"><div class="rows">
        ${this.cmd("import", "Import Survey Data")}${this.cmd("points", "Points", true)}${this.cmd("surfaces", "Surfaces", true)}
      </div></div><footer>Create Ground Data<span class="caret big"></span></footer></div>
      <div class="panel design"><div class="body">
        <div class="rows">${this.cmd("parcel", "Parcel", true)}${this.cmd("feature", "Feature Line", true)}${this.cmd("grading", "Grading", true)}</div>
        <div class="rows">${this.cmd("alignment", "Alignment", true)}${this.cmd("profile", "Profile", true)}${this.cmd("corridor", "Corridor")}</div>
        <div class="rows">${this.cmd("intersect", "Intersections", true)}${this.cmd("assembly", "Assembly", true)}${this.cmd("pipe", "Pipe Network", true)}</div>
      </div><footer>Create Design<span class="caret big"></span></footer></div>
      <div class="panel views"><div class="body"><div class="rows">
        ${this.cmd("pview", "Profile View", true)}${this.cmd("sample", "Sample Lines")}${this.cmd("sview", "Section Views", true)}
      </div></div><footer>Profile &amp; Section Views</footer></div>
      <div class="panel draw"><div class="body">
        <button class="split on" aria-label="Line"><cad-icon name="line"></cad-icon><span class="caret"></span></button>
        <button class="split" aria-label="Arc"><cad-icon name="arc"></cad-icon><span class="caret"></span></button>
        <span class="gap">${this.sq("pline")}</span>
        ${this.lineMenu()}
      </div><footer></footer></div>
      <div class="panel modify"><div class="body">
        <div class="rows">${this.cmd("move", "Move")}</div>
        <div class="rows">${this.cmd("rotate", "Rotate")}</div>
        <div class="rows">${this.cmd("trim", "Trim", true)}${this.cmd("fillet", "Fillet", true)}${this.cmd("array", "Array", true)}</div>
        <div class="stack">${this.sq("erase")}${this.sq("explode")}${this.sq("offset")}</div>
      </div><footer></footer></div>
      <div class="panel layers"><div class="body">
        <div class="lbtns">${this.sq("lprops")}${this.sq("lcur")}<span>${this.sq("lmatch")}${this.sq("lprev")}</span><span>${this.sq("liso")}${this.sq("lunis")}</span><span>${this.sq("lfreeze")}${this.sq("loff")}</span></div>
        <div class="combo"><select aria-label="Layer state"><option>Unsaved Layer State</option></select><span class="caret big"></span></div>
        <div class="combo"><cad-icon name="bulb"></cad-icon><cad-icon name="sun"></cad-icon><cad-icon name="unlock"></cad-icon><span class="sw"></span><select aria-label="Layer"><option>0</option></select><span class="caret big"></span></div>
      </div><footer>Layers<span class="caret big"></span></footer></div>
      <div class="panel clip"><div class="body">
        <button class="big paste"><svg viewBox="0 0 24 28"><rect x="2" y="3" width="17" height="21" rx="1" fill="#a8a39c" stroke="#6d6862"/><rect x="7" y="1" width="7" height="4" fill="#ddd" stroke="#666"/><path d="M10 10h8l4 4v11H10z" fill="#f8f8fb" stroke="#8890a0"/><path d="M18 10v4h4" fill="none" stroke="#8890a0"/></svg>Paste<span class="caret"></span></button>
        <div class="stack">${this.sq("cut")}${this.sq("copy")}${this.sq("pspec")}</div>
      </div><footer>Clipboard</footer></div>
    </section>`;
  }

  private canvas() {
    return html`<main class="canvas">
      <span class="vplabel">[−][Top][2D Wireframe]</span>
      <svg class="mdi" viewBox="0 0 36 12"><path d="M2 8.500h7" stroke="#fff" stroke-width="2"/><path d="M17 2.500h5v5M15 4.500h5v5h-5z" fill="none" stroke="#fff" stroke-width="1.300"/><path d="M28.500 3l5 6M33.500 3l-5 6" stroke="#fff" stroke-width="1.600"/></svg>
      <svg class="cube" viewBox="0 0 92 94"><circle cx="50" cy="48" r="36" fill="none" stroke="#454c54" stroke-width="9"/><rect x="33" y="31" width="34" height="34" fill="#c0c4c7"/><rect x="39" y="37" width="22" height="22" fill="#adb3b7"/>
        <text x="50" y="15">N</text><text x="50" y="91">S</text><text x="12" y="53">W</text><text x="87" y="53">E</text><text class="top" x="50" y="51">TOP</text></svg>
      <span class="wcs">WCS</span>
      <div class="nav"><svg viewBox="0 0 22 142" fill="none" stroke="#32383e"><circle cx="17" cy="4" r="2"/><circle cx="11" cy="20" r="7"/><circle cx="11" cy="20" r="2.500"/><path d="M4 20h14M11 13v14M10 33h3"/><path d="M7 56c-5-6-2-7 0-4v-7c1-2 2-1 2 0v-2c1-2 2-1 2 0v1c1-2 2-1 2 0v2c1-2 3-1 3 0v7l-2 4z"/><path d="M4 60l10 10M14 60L4 70M4 60h3M4 60v3M14 60h-3M4 70h3"/><circle cx="15" cy="71" r="3"/><path d="M17 73l2 3M10 80h3"/><ellipse cx="11" cy="93" rx="7" ry="3"/><path d="M11 86v14M8 89l3-3 3 3M8 97l3 3 3-3M10 106h3"/><path d="M4 113h4v4H4zM9 113h4v4H9zM14 113h4v4h-4zM4 119h11v9H4zM8 121l3 2-3 2z"/><circle cx="17" cy="137" r="2"/></svg></div>
      <svg class="section" viewBox="0 0 80 30"><path d="M0 21.500h67" stroke="#ddd" stroke-width="1.500"/><path d="M10.500 15v13M29.500 15v13M48.500 15v13M67.500 15v13" stroke="#c87880"/><g fill="none" stroke="#c87880"><ellipse cx="10.500" cy="7" rx="5" ry="3.500"/><ellipse cx="48" cy="7" rx="5" ry="3.500"/><ellipse cx="67" cy="7" rx="5" ry="3.500"/></g></svg>
      <svg class="ucs" viewBox="0 0 56 56"><path d="M5.500 14v34M5.500 48.500H39M2.500 45.500h6v6h-6z" fill="none" stroke="#d8dadc"/><path d="M6.500 3l4 5 4-5M10.500 8v5M42 39l8 9M50 39l-8 9" fill="none" stroke="#d8dadc"/></svg>
      <div class="cmd"><span class="grip"><span class="dots"></span><span>✕</span><cad-icon name="wrench"></cad-icon></span><cad-icon name="prompt"></cad-icon><span class="caret"></span><input aria-label="Command" placeholder="Type a command"><span class="up"></span></div>
    </main>`;
  }

  private arrow(d: string) {
    return html`<button class="go" aria-label="Sheet navigation"><svg viewBox="0 0 7 8"><path d=${d} fill="#444" stroke="#444" stroke-width=".6"/></svg></button>`;
  }
  private slash() {
    return html`<svg class="slash" viewBox="0 0 5 14"><path d="M5 0L0 14" stroke="#444"/></svg>`;
  }

  render() {
    return html`
      <button class="appbtn" aria-label="Application menu"><cad-icon name="logo"></cad-icon><span class="caret"></span><b>C3D</b></button>
      <header class="title"><span class="name"><span>AutoCAD Civil 3D 2014</span><span>line-by-SO.dwg</span></span>
        <span class="winbtns"><svg viewBox="0 0 12 12"><path d="M2 6.500h8" stroke="#999"/></svg><svg viewBox="0 0 12 12"><path d="M2.500 4.500h6v6h-6zM4.500 4v-2h6v6h-2" fill="none" stroke="#888"/></svg><svg viewBox="0 0 12 12"><path d="M2 2l8 8M10 2l-8 8" stroke="#777"/></svg></span>
      </header>
      <nav class="tabs">${ribbonTabs.map((t, i) => html`<button class=${i === 0 ? "on" : ""}>${t}</button>`)}<span class="pill"></span><span class="caret"></span></nav>
      ${this.ribbon()}
      <div class="docs"><div class="doctab">line-by-SO<span>✕</span></div><button class="plus" aria-label="New drawing"><svg viewBox="0 0 20 14"><path d="M2 1h11c3 0 6 6 6 11H6C3 12 1 2 2 1z" fill="#999" stroke="#666"/><path d="M10 3v7M6.500 6.500h7" stroke="#ccc" stroke-width="2"/></svg></button></div>
      <div class="work">${this.canvas()}
        <aside class="side"><div class="dock">${sideTools.map((g) => html`<div style="--n:${g.length}">${g.map((n) => html`<cad-icon name=${n}></cad-icon>`)}</div>`)}</div>
          <div class="dock small"><div style="--n:3"><cad-icon name="v8"></cad-icon><cad-icon name="v4"></cad-icon><cad-icon name="v7"></cad-icon></div></div></aside>
      </div>
      <div class="sheets">
        ${this.arrow("M1 0v8M6 0v8L2 4z")}${this.arrow("M5 0v8L1 4z")}${this.arrow("M2 0v8l4-4z")}${this.arrow("M6 0v8M1 0v8l4-4z")}
        <button class="model">Model</button><button class="lay">Layout1</button>${this.slash()}<button class="lay">Layout2</button>${this.slash()}
      </div>
      <div class="status"><span class="coords">6855.232, 4129.973, 0.000</span>
        <div class="toggles">${statusToggles.map(([n, on]) => html`<button class=${on ? "on" : ""} aria-label=${n}><cad-icon name=${n}></cad-icon></button>`)}</div>
        <div class="sright"><button>MODEL</button><button class="g"><cad-icon name="anno"></cad-icon>1:2000<span class="caret"></span></button><button><cad-icon name="annoy"></cad-icon></button><button><cad-icon name="anno"></cad-icon></button>
          <button class="g"><cad-icon name="cog"></cad-icon></button><button><cad-icon name="lockg"></cad-icon></button><button><cad-icon name="ball"></cad-icon></button><button class="g"><cad-icon name="trust"></cad-icon></button><button><cad-icon name="bulb"></cad-icon></button><button class="end"><span class="caret"></span></button></div>
      </div>
      <footer class="task">
        <button class="start" aria-label="Start"><cad-icon name="windows"></cad-icon></button>
        <label class="search"><cad-icon name="search"></cad-icon><input placeholder="Type here to search" aria-label="Search"></label>
        <div class="apps"><button class="tv" aria-label="Task view"><cad-icon name="taskview"></cad-icon></button><button class="run" aria-label="Explorer"><cad-icon name="folder"></cad-icon></button><button aria-label="Snip"><cad-icon name="snip"></cad-icon></button><button aria-label="Edge"><cad-icon name="edge"></cad-icon></button><button aria-label="Opera"><cad-icon name="opera"></cad-icon></button><button class="run on" aria-label="AutoCAD"><cad-icon name="acad"></cad-icon></button><button class="run" aria-label="Paint"><cad-icon name="paint"></cad-icon></button></div>
        <div class="tray"><span class="my">MY</span><cad-icon class="hp" name="help"></cad-icon>
          <svg class="news" viewBox="0 0 22 14" fill="none" stroke="#fff"><path d="M1 1h16v12H3c-2 0-2-1-2-2zM17 3h4v8c0 2-3 2-4 2M4 4h10"/><path d="M4 7h4v3H4zM10 7.500h4M10 10h4"/></svg>
          <span>90°F</span><span class="sunny">Mostly sunny</span>
          <cad-icon name="chevup"></cad-icon><cad-icon name="meet"></cad-icon><cad-icon name="volume"></cad-icon><cad-icon name="globe"></cad-icon>
          <span class="clock">11:20 PM<br>11/27/2021</span><span class="bell"><cad-icon name="note"></cad-icon><i>4</i></span></div>
      </footer>
      <h1 class="banner" lang="my"><span>Alignment ရဲ့ Station</span><span>နှင့် Offset တန်ဖိုးများကို</span><span class="small">အသုံးပြုပြီး လိုင်းဆွဲနည်း</span></h1>
    `;
  }
}
